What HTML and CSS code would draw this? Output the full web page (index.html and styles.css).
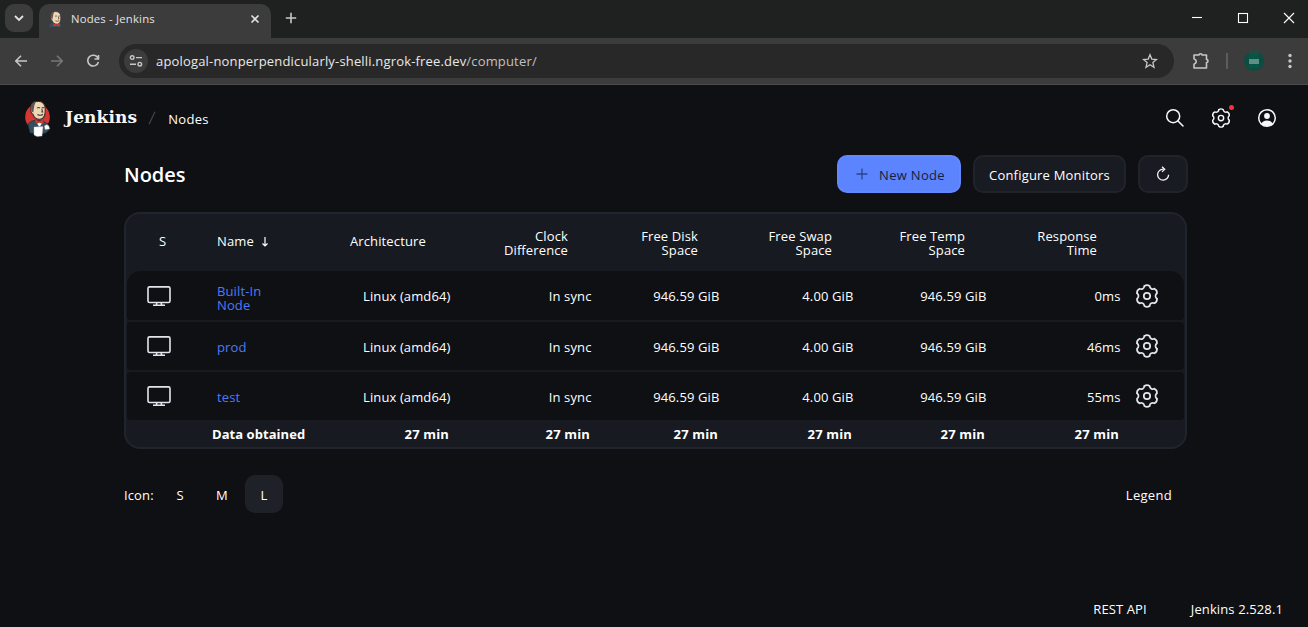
FILE: index.html
```html
<!DOCTYPE html>
<html lang="en">
<head>
<meta charset="utf-8">
<title>Nodes - Jenkins</title>
<link rel="stylesheet" href="styles.css">
</head>
<body>
<svg class="defs" width="0" height="0">
  <defs>
    <path id="tooth" d="M-2.600-10Q0-11.900 2.600-10C3-7.600 5.080-6.200 7.360-7.250"/>
    <symbol id="gear" viewBox="-12 -12 24 24">
      <g fill="none" stroke="currentColor" stroke-width="1.7" stroke-linecap="round">
        <use href="#tooth"/><use href="#tooth" transform="rotate(60)"/><use href="#tooth" transform="rotate(120)"/>
        <use href="#tooth" transform="rotate(180)"/><use href="#tooth" transform="rotate(240)"/><use href="#tooth" transform="rotate(300)"/>
        <circle r="3.200"/>
      </g>
    </symbol>
    <symbol id="monitor" viewBox="0 0 24 20">
      <g fill="none" stroke="currentColor" stroke-width="1.6">
        <rect x="1" y=".9" width="22" height="15.600" rx="1.600"/>
        <path d="M9.800 16.500 9.400 19M14.200 16.500l.4 2.500M6 19.200h12"/>
      </g>
    </symbol>
    <symbol id="butler-head" viewBox="5 0 17 19">
      <path fill="#efd6b4" stroke="#382d2b" stroke-width="1" d="M7 8C6 3.500 9 .8 13.500.7 18 .7 20.500 4 20.300 8c.2 5-1 9.500-4.800 9.800C11.500 18 9.500 16 8.700 13 7.200 12.500 6.300 10 7 8Z"/>
      <path fill="#5b5554" d="M7.300 7.500C6 5 7.500 2 12 1 9.800 3.500 10.300 5 9.500 8l-.5 3.500C7 10.500 7 9 7.300 7.500Z"/>
      <path fill="none" stroke="#4a3b36" stroke-width="1" d="M12.500 7.200q1.500-1.200 2.900 0M17 7.200q1.200-1 2.400 0M17 8l.9 2.800h-1.300M13 13.300q2.800 1.600 5.300-.3"/>
    </symbol>
  </defs>
</svg>

<header class="browser">
  <div class="tabs">
    <button class="tab-search"><svg width="10" height="10" viewBox="0 0 10 10"><path d="M1 3 5 7 9 3"/></svg></button>
    <div class="tab">
      <svg class="favicon" width="16" height="16" viewBox="0 0 16 16">
        <path fill="#335061" d="M1 16q0-3.500 4-4.500h5l3 1.500v3Z"/>
        <use href="#butler-head" x="1" y="0" width="13.500" height="14"/>
        <path fill="#d33833" d="m5.500 12.500 3 1 3-1v3l-3-.8-3 .8Z"/>
      </svg>
      <span class="tab-title">Nodes - Jenkins</span>
      <svg class="tab-close" width="10" height="10" viewBox="0 0 10 10"><path d="m1.500 1.500 7 7m0-7-7 7"/></svg>
    </div>
    <svg class="tab-new" width="12" height="12" viewBox="0 0 12 12"><path d="M6 .8v10.400M.8 6h10.400"/></svg>
    <div class="window-controls">
      <svg width="12" height="12" viewBox="0 0 12 12"><path d="M1 5.500h10"/></svg>
      <svg width="12" height="12" viewBox="0 0 12 12"><rect x="1.500" y="1.500" width="9" height="9"/></svg>
      <svg width="12" height="12" viewBox="0 0 12 12"><path d="m1 1 10 10M11 1 1 11"/></svg>
    </div>
  </div>
  <div class="toolbar">
    <svg class="nav-icon" width="14" height="14" viewBox="0 0 14 14"><path d="M13 7H2M7 1.800 1.800 7 7 12.200"/></svg>
    <svg class="nav-icon muted" width="14" height="14" viewBox="0 0 14 14"><path d="M1 7h11M7 1.800 12.200 7 7 12.200"/></svg>
    <svg class="nav-icon" width="14" height="14" viewBox="0 0 14 14"><path d="M12 4.200A5.400 5.400 0 1 0 12.400 8M12.500 1v4h-4"/></svg>
    <div class="address">
      <span class="site-info"><svg width="14" height="14" viewBox="0 0 14 14"><circle cx="3.200" cy="3.600" r="1.800"/><circle cx="10.800" cy="10.200" r="1.800"/><path d="M7 3.600h6M1 10.200h6"/></svg></span>
      <span class="url">apologal-nonperpendicularly-shelli.ngrok-free.dev<span class="url-path">/computer/</span></span>
      <svg class="star" width="16" height="16" viewBox="0 0 16 16"><path d="m8 1.700 1.800 4.400 4.700.4-3.600 3.100 1.100 4.700L8 11.800l-4 2.500 1.100-4.700-3.600-3.100 4.700-.4Z"/></svg>
    </div>
    <svg class="extension" width="18" height="18" viewBox="0 0 18 18"><path d="M2 3h5a1.500 1.300 0 0 1 3 0h4.500v4.500a1.500 1.500 0 0 1 0 3v5.500H2v-3.800q2.300-1 2.300-2.700T2 6.800Z" stroke-linejoin="round"/></svg>
    <span class="divider"></span>
    <svg class="profile" width="20" height="22" viewBox="0 0 20 22"><circle cx="10" cy="11" r="10" fill="#0b4d40"/><path fill="#25483f" d="M5 0h10v4H5z"/><path fill="#085545" d="M5 4h10v14H5z"/><path fill="#5d8f84" d="M5 9h10v5H5z"/></svg>
    <svg class="kebab" width="4" height="16" viewBox="0 0 4 16"><circle cx="2" cy="2.500" r="1.700"/><circle cx="2" cy="8" r="1.700"/><circle cx="2" cy="13.500" r="1.700"/></svg>
  </div>
</header>

<div class="page">
  <nav class="page-header">
    <svg class="logo" width="28" height="37" viewBox="0 0 28 37">
      <ellipse cx="13.500" cy="17" rx="12.300" ry="13" fill="#d33833"/>
      <path fill="#335061" stroke="#1d2c38" stroke-width=".7" d="M4 24q3-3.500 8-4l7 1 5 3 1 6-3 3-6 1-10-1Z"/>
      <use href="#butler-head" x="5" y="0" width="18" height="21"/>
      <path fill="#fff" d="m11 19.500 4 3 4-3 .5 7h-6Z"/>
      <path fill="#335061" d="m12 22 3.500 5 3.500-5 2 5-6 2-5-2Z"/>
      <path fill="#d33833" stroke="#81211f" stroke-width=".4" d="m11 19.500 4 1.700 4.500-1.700.3 4.500-4.600-1.500-3.700 1.700Z"/>
      <path fill="#fff" stroke="#bbb" stroke-width=".4" d="m10 27 9-.5-1 9.500-5 .5-3-1.500Z"/>
      <path fill="#fff" stroke="#444" stroke-width=".5" d="M20 26q3-3 5 0l1 3-5 1Z"/>
    </svg>
    <span class="brand">Jenkins</span>
    <svg class="slash" width="8" height="14" viewBox="0 0 8 14"><path d="M7 .8 1 13.200"/></svg>
    <span class="crumb">Nodes</span>
    <div class="header-actions">
      <svg width="20" height="20" viewBox="0 0 20 20"><circle cx="8.200" cy="8.200" r="6.500"/><path d="m13 13 5 5" stroke-linecap="round"/></svg>
      <span class="manage"><svg width="20" height="20"><use href="#gear"/></svg><i class="badge"></i></span>
      <svg width="20" height="20" viewBox="0 0 20 20"><circle cx="10" cy="10" r="8.300"/><circle cx="10" cy="8" r="2.900" class="solid"/><path class="solid" d="M4.300 16Q5.500 12.500 10 12.500T15.700 16Q10 20.500 4.300 16Z"/></svg>
    </div>
  </nav>

  <main class="content">
    <div class="app-bar">
      <h1>Nodes</h1>
      <button class="btn primary"><svg width="12" height="12" viewBox="0 0 12 12"><path d="M6 .5v11M.5 6h11"/></svg><span>New Node</span></button>
      <button class="btn configure"><span>Configure Monitors</span></button>
      <button class="btn refresh"><svg width="14" height="16" viewBox="0 0 14 16"><path d="M7.500 3.200H7a5.500 5.500 0 1 0 5.600 5.500M6 .8l2.700 2.500L6 5.900"/></svg></button>
    </div>

    <section class="nodes">
      <div class="row head">
        <span class="status">S</span><span class="name">Name<svg width="8" height="10" viewBox="0 0 8 10"><path d="M4 0v9M1.500 6.500 4 9l2.500-2.500"/></svg></span><span class="arch">Architecture</span><span>Clock<br>Difference</span><span class="disk">Free Disk<br>Space</span><span class="disk">Free Swap<br>Space</span><span class="disk">Free Temp<br>Space</span><span>Response<br>Time</span>
      </div>
      <div class="row node">
        <span class="status"><svg width="24" height="20"><use href="#monitor"/></svg></span><a class="name">Built-In<br>Node</a><span>Linux (amd64)</span><span>In sync</span><span>946.59 GiB</span><span>4.00 GiB</span><span>946.59 GiB</span><span>0ms</span><span class="config"><svg width="24" height="24"><use href="#gear"/></svg></span>
      </div>
      <div class="row node">
        <span class="status"><svg width="24" height="20"><use href="#monitor"/></svg></span><a class="name">prod</a><span>Linux (amd64)</span><span>In sync</span><span>946.59 GiB</span><span>4.00 GiB</span><span>946.59 GiB</span><span>46ms</span><span class="config"><svg width="24" height="24"><use href="#gear"/></svg></span>
      </div>
      <div class="row node">
        <span class="status"><svg width="24" height="20"><use href="#monitor"/></svg></span><a class="name">test</a><span>Linux (amd64)</span><span>In sync</span><span>946.59 GiB</span><span>4.00 GiB</span><span>946.59 GiB</span><span>55ms</span><span class="config"><svg width="24" height="24"><use href="#gear"/></svg></span>
      </div>
      <div class="row foot">
        <span></span><span class="name">Data obtained</span><span>27 min</span><span>27 min</span><span>27 min</span><span>27 min</span><span>27 min</span><span>27 min</span>
      </div>
    </section>

    <div class="table-footer">
      <span class="icon-label">Icon:</span>
      <span class="size">S</span><span class="size">M</span><span class="size selected">L</span>
      <span class="legend">Legend</span>
    </div>
  </main>

  <footer class="page-footer"><span>REST API</span><span>Jenkins 2.528.1</span></footer>
</div>
</body>
</html>
```
FILE: styles.css
```css
* { box-sizing: border-box; }

body {
  margin: 0;
  height: 627px;
  display: flex;
  flex-direction: column;
  overflow: hidden;
  background: #0f1014;
  color: #fff;
  font: 13px/14px "Open Sans", "Noto Sans", sans-serif;
  letter-spacing: .12px;
}

svg { display: block; flex: none; }
.defs { position: absolute; }
button { margin: 0; padding: 0; border: 0; font: inherit; color: inherit; letter-spacing: inherit; }

/* Browser window */
.browser { height: 85px; flex: none; background: #3c3c3c; border-bottom: 1px solid #4b4b4b; }
.browser svg { fill: none; stroke: #c7c7c7; stroke-width: 1.6; }
.tabs { height: 38px; display: flex; align-items: flex-start; background: #1f2020; }
.tab-search {
  width: 28px; height: 28px; margin: 4px 6px 0 5px;
  display: grid; place-items: center;
  border-radius: 9px; background: #3c3c3c;
}
.browser .tab-search svg { stroke: #e3e3e3; stroke-width: 1.8; }
.tab {
  width: 232px; height: 34px; margin-top: 4px; padding: 0 11px 5px 9px;
  display: flex; align-items: center;
  border-radius: 10px 10px 0 0; background: #3c3c3c;
}
.browser .favicon { stroke: none; }
.tab-title { margin-left: 7px; font-size: 11.3px; letter-spacing: .2px; color: #e3e3e3; white-space: nowrap; }
.tab-close { margin-left: auto; }
.browser .tab-close { stroke: #e3e3e3; }
.tab-new { margin: 12px 0 0 14px; }
.window-controls { margin: 12px 13px 0 auto; display: flex; gap: 34px; }
.browser .window-controls svg { stroke: #fff; stroke-width: 1.1; }

.toolbar { height: 46px; display: flex; align-items: center; padding: 0 16px 0 14px; }
.nav-icon { margin-right: 22px; }
.browser .muted { stroke: #777; }
.address {
  width: 1055px; height: 34px; margin-left: -3px; padding: 0 16px 0 5px;
  display: flex; align-items: center;
  border-radius: 17px; background: #282828;
}
.site-info { width: 24px; height: 24px; display: grid; place-items: center; border-radius: 50%; background: #3c3c3c; }
.browser .site-info svg { stroke-width: 1.4; }
.url { margin-left: 8px; letter-spacing: .17px; color: #e8e8e8; white-space: nowrap; }
.url-path { color: #c0c0c0; }
.star { margin-left: auto; }
.browser .star { stroke-width: 1.3; }
.extension { margin-left: 18px; }
.divider { width: 2px; height: 16px; margin-left: 16px; background: #5c5c5c; }
.profile { margin-left: 16px; }
.browser .profile { stroke: none; }
.kebab { margin-left: 24px; }
.browser .kebab { fill: #c7c7c7; stroke: none; }

/* Jenkins header */
.page { flex: 1; display: flex; flex-direction: column; }
.page-header { height: 66px; padding: 0 31px 0 24px; display: flex; align-items: center; }
.brand { margin: -2px 0 0 13px; font: bold 17px/20px "DejaVu Serif", serif; color: #f6f6fa; }
.slash { margin-left: 11px; fill: none; stroke: #42444c; stroke-width: 1.2; }
.crumb { margin-left: 12px; margin-top: 2px; letter-spacing: .3px; }
.header-actions { margin-left: auto; display: flex; gap: 26px; }
.header-actions svg { fill: none; stroke: #f8f8fc; stroke-width: 1.5; color: #f8f8fc; }
.header-actions .solid { fill: #f8f8fc; stroke: none; }
.manage { position: relative; }
.badge { position: absolute; right: -3px; top: -3px; width: 5px; height: 5px; border-radius: 50%; background: #f5333a; }

/* Nodes page */
.content { width: 1064px; margin-left: 124px; }
.app-bar { height: 38px; margin-top: 4px; display: flex; align-items: center; gap: 12px; }
h1 { margin: 0 auto 0 0; padding-top: 2px; font-size: 20px; line-height: 26px; font-weight: 600; letter-spacing: 0; }
.btn {
  height: 38px; display: flex; align-items: center; justify-content: center;
  border: 2px solid #20232a; border-radius: 10px; background: #191b22;
}
.btn span { padding-top: 2px; letter-spacing: .2px; }
.btn svg { fill: none; stroke: #f4f4f8; stroke-width: 1.3; }
.primary { width: 124px; padding-left: 3px; gap: 11px; border-color: #6188ff; background: #5c84ff; color: #16203c; }
.primary svg { stroke: #2b4489; }
.primary span { letter-spacing: .3px; }
.configure { width: 153px; }
.refresh { width: 50px; }

.nodes {
  width: 1063px; height: 237px; margin-top: 19px;
  border: 2px solid #20242c; border-radius: 16px; background: #171a20;
}
.row {
  display: grid; align-items: center; margin: 0 1px;
  grid-template-columns: 79px 133px 121px 141px 128px 134px 133px 134px 1fr;
  text-align: right;
}
.row > * { padding-right: 9.5px; }
.row .status { justify-self: start; padding: 0 0 0 20px; }
.row .name { padding: 0 0 0 11px; text-align: left; }
.head { height: 57px; }
.head > * { padding-right: 33px; }
.head .disk { padding-right: 31px; }
.row.head .status { padding: 0 0 4px 32px; }
.row.head .name { display: flex; align-items: center; gap: 7px; padding-bottom: 4px; }
.head .name svg { margin-top: 2px; fill: none; stroke: #fff; stroke-width: 1.2; }
.row.head .arch { padding: 0 0 4px 11px; text-align: left; }
.node { height: 48px; margin-bottom: 2px; border-radius: 4px; background: #0f1014; padding-top: 2px; }
.head + .node { height: 49px; padding-top: 1px; border-radius: 14px 14px 4px 4px; }
.head + .node .name { padding-top: 3px; }
.node .name { color: #4d79f8; }
.node .status svg, .node .config svg { color: #e4e4ef; margin-top: -3px; }
.head + .node svg { margin-top: -1px; }
.row .config { padding: 0 0 0 5px; }
.foot { height: 25px; padding-bottom: 2px; font-weight: 700; }
.foot > * { padding-right: 11px; letter-spacing: .15px; }
.foot .name { padding-left: 6px; letter-spacing: .05px; white-space: nowrap; }

.table-footer { height: 38px; margin-top: 26px; padding-top: 1px; display: flex; align-items: center; }
.icon-label { width: 37px; }
.size { width: 38px; height: 38px; margin: -1px 4px 0 0; padding-top: 2px; display: grid; place-items: center; border-radius: 10px; }
.selected { background: #1f2129; }
.legend { margin-left: auto; padding-right: 16px; letter-spacing: .3px; }

.page-footer { margin-top: auto; padding: 0 25px 11px; display: flex; justify-content: flex-end; gap: 44px; }
```
